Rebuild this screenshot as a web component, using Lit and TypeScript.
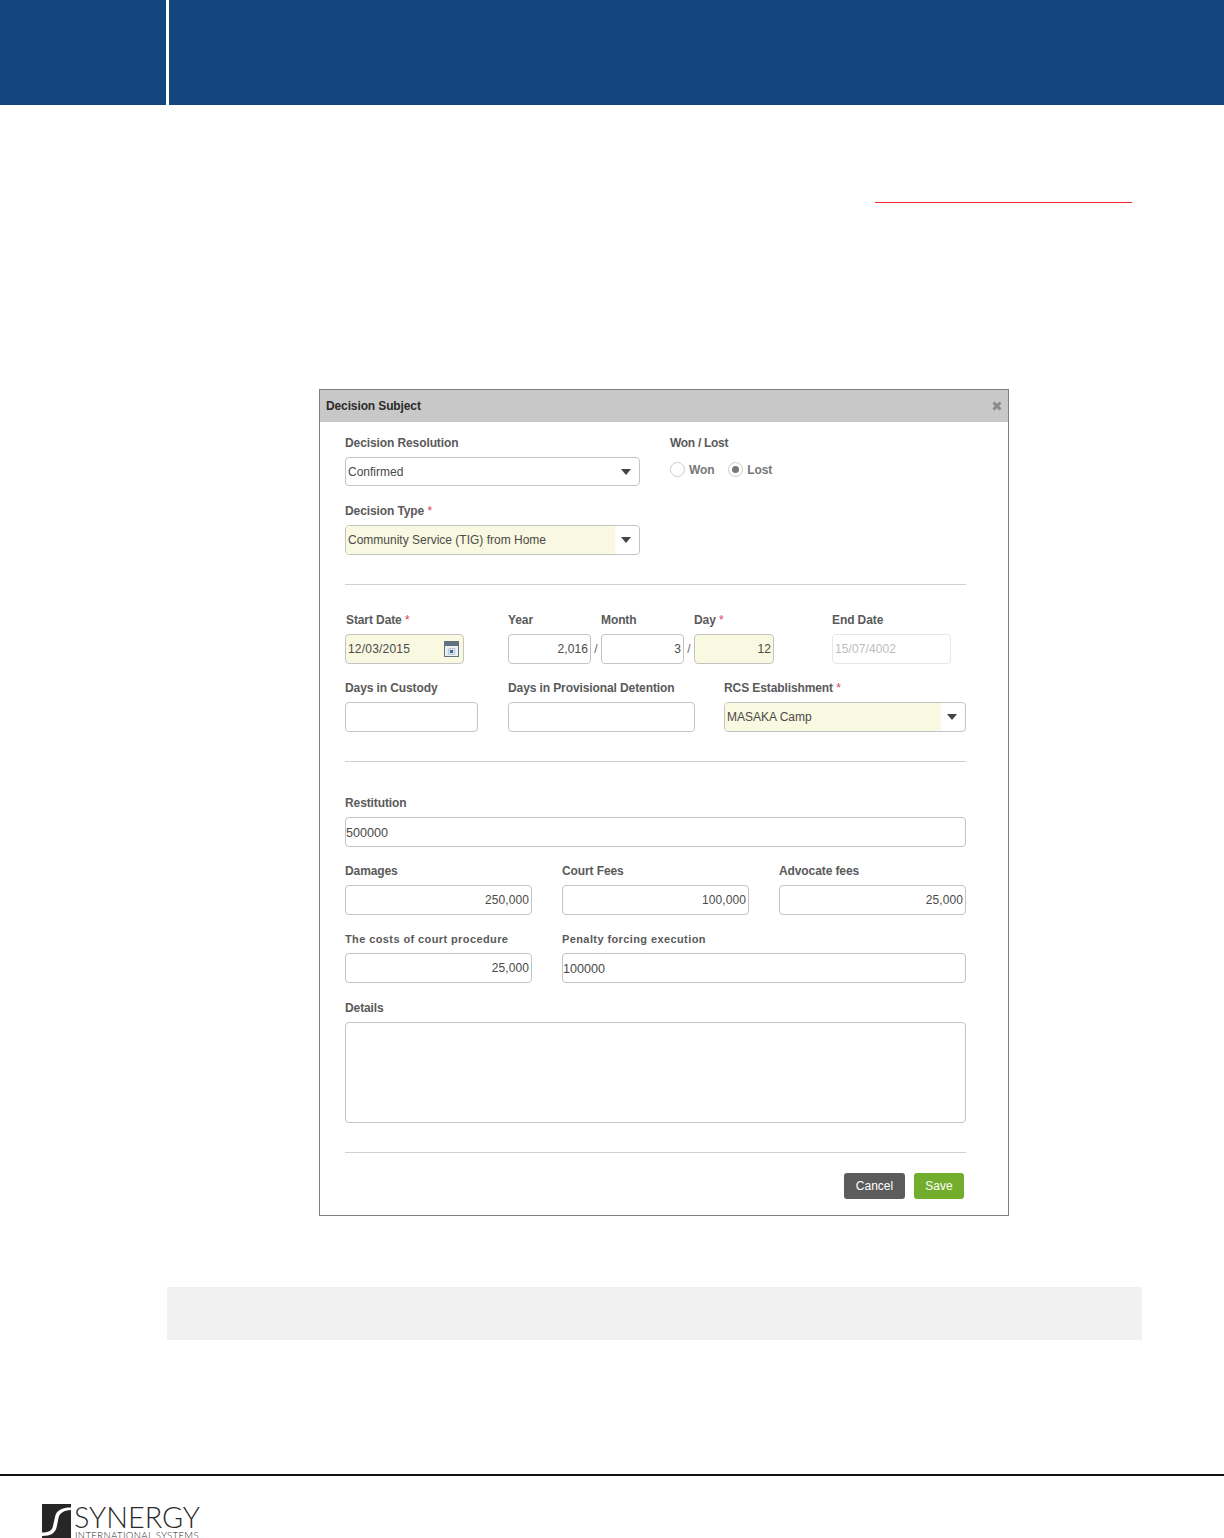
import { LitElement, html, css } from "lit";
import { customElement } from "lit/decorators.js";

const caret = html`<span class="caret"></span>`;

@customElement("app-root")
export class AppRoot extends LitElement {
  static styles = css`
    :host { display: block; height: 1538px; overflow: hidden; background: #fff; font-family: "Liberation Sans", Arial, sans-serif; }
    * { box-sizing: border-box; }
    .top { display: flex; gap: 3px; height: 105px; }
    .top div { background: #14457f; }
    .top .a { width: 166px; }
    .top .b { flex: 1; }
    .redline { height: 1px; width: 257px; background: #f0282d; margin: 97px 0 0 875px; }
    .dialog { width: 690px; height: 827px; margin: 186px 0 0 319px; border: 1px solid #808080; background: #fff; }
    .title { height: 32px; background: #c8c8c8; display: flex; align-items: center; justify-content: space-between; padding: 0 6.5px 0 6px; font-size: 12px; font-weight: bold; letter-spacing: -0.12px; color: #2b2b2b; }
    .close { width: 10px; height: 10px; display: block; }
    .body { padding: 14px 42px 0 25px; }
    .row { display: flex; margin-bottom: 17px; }
    .row.mb18 { margin-bottom: 18px; }
    .row.mb29 { margin-bottom: 29px; }
    .row.mt28 { margin-top: 28px; }
    .row.mt34 { margin-top: 34px; }
    .f { display: flex; flex-direction: column; }
    .w621 { width: 621px; }
    .w404 { width: 404px; }
    .w295 { width: 295px; }
    .w242 { width: 242px; }
    .w187 { width: 187px; }
    .w133 { width: 133px; }
    .w119 { width: 119px; }
    .w83 { width: 83px; }
    .w80 { width: 80px; }
    .mr29 { margin-right: 29px; }
    .mr30 { margin-right: 30px; }
    .mr44 { margin-right: 44px; }
    .mr58 { margin-right: 58px; }
    label { display: block; height: 14px; line-height: 14px; font-size: 12px; font-weight: bold; letter-spacing: -0.1px; color: #5a5a5a; margin-bottom: 7px; white-space: nowrap; }
    label.small { font-size: 11px; letter-spacing: .4px; }
    label.tight { letter-spacing: -0.3px; }
    label.in1 { padding-left: 1px; }
    .req { color: #d9434e; font-weight: normal; }
    input, textarea, .sel { display: block; height: 30px; width: 100%; border: 1px solid #c4c4c4; border-radius: 4px; background: #fff; padding: 0 2px; font: 12px "Liberation Sans", Arial, sans-serif; color: #4a4a4a; outline: none; }
    input.lg { font-size: 12.6px; padding: 1px 0 0; }
    input.r { text-align: right; letter-spacing: .1px; }
    input.y { background: #f9f8e0; }
    input:disabled { border-color: #e6e6e6; color: #bdbdbd; background: #fff; letter-spacing: .1px; }
    textarea { height: 101px; resize: none; }
    .sel { display: flex; align-items: stretch; padding: 0; overflow: hidden; }
    .sel.h29 { height: 29px; }
    .sel .v { flex: 1; display: flex; align-items: center; padding-left: 2px; }
    .sel .v.y { background: #f9f8e0; }
    .sel .b { width: 24px; display: flex; align-items: center; justify-content: center; }
    .caret { width: 0; height: 0; border-left: 5.5px solid transparent; border-right: 5.5px solid transparent; border-top: 6px solid #444; margin-right: 3px; }
    .radios { display: flex; align-items: center; height: 15px; margin-top: 5px; font-size: 12px; font-weight: bold; letter-spacing: -0.05px; color: #777; }
    .radio { width: 15px; height: 15px; border: 1px solid #ccc; border-radius: 50%; margin-right: 4px; display: flex; align-items: center; justify-content: center; background: #fff; }
    .radio i { width: 7px; height: 7px; background: #777; border-radius: 50%; }
    .radios span.t { margin-right: 13.5px; }
    hr { border: 0; height: 1px; background: #cfcfcf; margin: 0; }
    .date { align-items: center; justify-content: space-between; padding: 0 4px 0 2px; background: #f9f8e0; letter-spacing: .2px; }
    .slash { width: 10px; margin-top: 21px; text-align: center; font-size: 12px; color: #666; height: 30px; line-height: 30px; }
    .buttons { display: flex; justify-content: flex-end; gap: 9px; margin: 20px 2px 0 0; }
    button { height: 26px; border: 0; border-radius: 3px; color: #fff; font: 12px "Liberation Sans", Arial, sans-serif; padding: 0; }
    .cancel { width: 61px; background: #5c5c5c; }
    .save { width: 50px; background: #72ae2c; }
    .band { height: 53px; width: 975px; margin: 71px 0 0 167px; background: #f1f1f1; }
    .rule { height: 2px; background: #111; margin-top: 134px; }
    .logo { display: flex; gap: 3px; margin: 28px 0 0 42px; height: 34px; overflow: hidden; }
    .logo svg { width: 29px; height: 34px; flex: none; }
    .lt { color: #2a2a2a; white-space: nowrap; font-family: "Lato", sans-serif; font-weight: 300; }
    .lt1 { font-size: 28.8px; line-height: 26px; }
    .lt2 { font-size: 9.6px; line-height: 11px; letter-spacing: 0.35px; margin-left: 1px; }
  `;

  render() {
    return html`
      <div class="top"><div class="a"></div><div class="b"></div></div>
      <div class="redline"></div>
      <div class="dialog">
        <div class="title"><span>Decision Subject</span>
          <svg class="close" viewBox="0 0 10 10"><path d="M1.500 1.500 8.500 8.500M8.500 1.500 1.500 8.500" stroke="#8a8a8a" stroke-width="3"/></svg>
        </div>
        <div class="body">
          <div class="row mb18">
            <div class="f w295 mr30">
              <label>Decision Resolution</label>
              <div class="sel h29"><div class="v">Confirmed</div><div class="b">${caret}</div></div>
            </div>
            <div class="f">
              <label class="tight">Won / Lost</label>
              <div class="radios">
                <span class="radio"></span><span class="t">Won</span>
                <span class="radio"><i></i></span><span class="t">Lost</span>
              </div>
            </div>
          </div>
          <div class="row mb29">
            <div class="f w295">
              <label>Decision Type <span class="req">*</span></label>
              <div class="sel"><div class="v y">Community Service (TIG) from Home</div><div class="b">${caret}</div></div>
            </div>
          </div>
          <hr />
          <div class="row mt28">
            <div class="f w119 mr44">
              <label class="in1">Start Date <span class="req">*</span></label>
              <div class="sel date"><span>12/03/2015</span>
                <svg width="15" height="16" viewBox="0 0 15 16"><rect x=".5" y=".5" width="14" height="15" fill="#eef1f4" stroke="#62717f"/><rect width="15" height="5" fill="#62717f"/><path d="M3.500 7.500h8M3.500 9.500h8M3.500 11.500h8M3.500 13.500h8M4.500 7v7M6.500 7v7M8.500 7v7M10.500 7v7" stroke="#c6ccd3"/><rect x="6" y="9" width="3" height="3" fill="#2c6fb5"/></svg>
              </div>
            </div>
            <div class="f w83"><label>Year</label><input class="r" value="2,016" /></div>
            <div class="slash">/</div>
            <div class="f w83"><label>Month</label><input class="r" value="3" /></div>
            <div class="slash">/</div>
            <div class="f w80 mr58"><label>Day <span class="req">*</span></label><input class="r y" value="12" /></div>
            <div class="f w119"><label>End Date</label><input disabled value="15/07/4002" /></div>
          </div>
          <div class="row mb29">
            <div class="f w133 mr30"><label>Days in Custody</label><input /></div>
            <div class="f w187 mr29"><label>Days in Provisional Detention</label><input /></div>
            <div class="f w242">
              <label>RCS Establishment <span class="req">*</span></label>
              <div class="sel"><div class="v y">MASAKA Camp</div><div class="b">${caret}</div></div>
            </div>
          </div>
          <hr />
          <div class="row mt34">
            <div class="f w621"><label>Restitution</label><input class="lg" value="500000" /></div>
          </div>
          <div class="row">
            <div class="f w187 mr30"><label>Damages</label><input class="r" value="250,000" /></div>
            <div class="f w187 mr30"><label>Court Fees</label><input class="r" value="100,000" /></div>
            <div class="f w187"><label>Advocate fees</label><input class="r" value="25,000" /></div>
          </div>
          <div class="row mb18">
            <div class="f w187 mr30"><label class="small">The costs of court procedure</label><input class="r" value="25,000" /></div>
            <div class="f w404"><label class="small">Penalty forcing execution</label><input class="lg" value="100000" /></div>
          </div>
          <div class="row mb29">
            <div class="f w621"><label>Details</label><textarea></textarea></div>
          </div>
          <hr />
          <div class="buttons">
            <button class="cancel">Cancel</button><button class="save">Save</button>
          </div>
        </div>
      </div>
      <div class="band"></div>
      <div class="rule"></div>
      <div class="logo">
        <svg viewBox="0 0 29 34"><rect width="29" height="34" fill="#262626"/><path d="M29 3.500C20 3.500 14.500 6 13 13L11 22C10 27 6 28.500 0 28.500V32C9 32 13.500 29 14.800 22.500L16.500 14C17.800 8.500 22 6.500 29 6Z" fill="#fff"/></svg>
        <div>
          <div class="lt lt1">SYNERGY</div>
          <div class="lt lt2">INTERNATIONAL SYSTEMS</div>
        </div>
      </div>
    `;
  }
}
